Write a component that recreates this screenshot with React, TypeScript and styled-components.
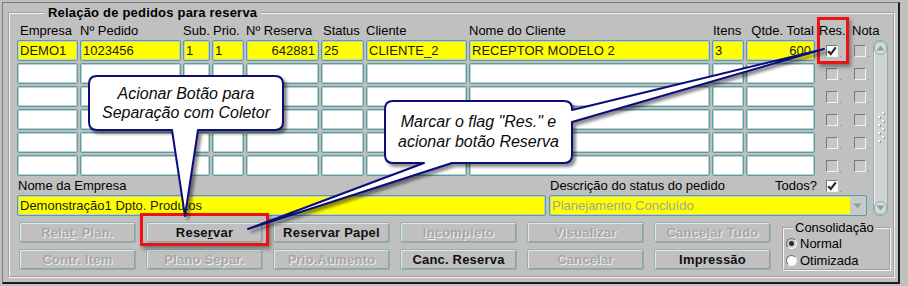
import React from "react";
import styled, { createGlobalStyle } from "styled-components";

const GlobalStyle = createGlobalStyle`
  html, body { margin: 0; padding: 0; background: #c0c0c0; }
  body { font-family: "Liberation Sans", Arial, sans-serif; font-size: 13px; color: #000; }
  * { box-sizing: border-box; }
`;

const FONT = `"Liberation Sans", Arial, sans-serif`;

const Page = styled.div`
  position: relative;
  width: 908px;
  height: 286px;
  overflow: hidden;
  background: #c0c0c0;
  padding: 2px 0 0 2px;
`;

const Window = styled.div`
  width: 898px;
  height: 282px;
  border-top: 1px solid #7b7b7b;
  border-left: 1px solid #7b7b7b;
  border-right: 2px solid #1e1e1e;
  border-bottom: 2px solid #1e1e1e;
  padding: 2px 0 0 5px;
`;

const Group = styled.fieldset`
  margin: 0;
  width: 887px;
  height: 273px;
  border: 2px groove #f4f4f4;
  padding: 3px 0 0 7px;
  min-width: 0;
`;

const GroupLegend = styled.legend`
  margin-left: 27px;
  padding: 0 4px;
  font: bold 13px ${FONT};
  letter-spacing: 0.2px;
  line-height: 15px;
  color: #000;
`;

const Upper = styled.div`
  display: flex;
  gap: 2px;
`;

const LeftBlock = styled.div`
  width: 854px;
  display: flex;
  flex-direction: column;
`;

const Table = styled.div`
  display: grid;
  grid-template-columns: 61px 101px 27px 32px 73px 43px 101px 241px 32px 69px 32px 20px;
  grid-template-rows: 15px repeat(6, 21px);
  column-gap: 2px;
  row-gap: 2px;
`;

const HeaderCell = styled.div<{ $align?: string; $pad?: number }>`
  line-height: 15px;
  white-space: nowrap;
  text-align: ${(p) => p.$align || "left"};
  padding-left: ${(p) => p.$pad ?? 0}px;
  padding-right: ${(p) => (p.$align === "right" ? 1 : 0)}px;
  color: #000;
  overflow: visible;
  direction: ${(p) => (p.$align === "right" ? "rtl" : "ltr")};
`;

const Cell = styled.div<{ $yellow?: boolean; $align?: string }>`
  background: ${(p) => (p.$yellow ? "#ffff00" : "#ffffff")};
  border: 1px solid #5f9b9b;
  box-shadow: inset 0 0 0 1px #b2d4d4;
  border-radius: 2px;
  padding: 0 3px 0 2px;
  display: flex;
  align-items: center;
  justify-content: ${(p) => (p.$align === "right" ? "flex-end" : "flex-start")};
  white-space: nowrap;
  overflow: hidden;
  color: #1a1a1a;
  line-height: 15px;
`;

const CheckCell = styled.div<{ $pad: number }>`
  display: flex;
  align-items: center;
  padding-left: ${(p) => p.$pad}px;
`;

const Box = styled.span<{ $checked?: boolean }>`
  position: relative;
  display: inline-flex;
  align-items: center;
  justify-content: center;
  width: 12px;
  height: 12px;
  flex: none;
  background: ${(p) => (p.$checked ? "#ffffff" : "#c6c6c6")};
  border-top: 1px solid #7a7a7a;
  border-left: 1px solid #7a7a7a;
  border-right: 1px solid #f2f2f2;
  border-bottom: 1px solid #f2f2f2;
  &::after {
    content: "";
    position: absolute;
    right: -4px;
    bottom: -1px;
    width: 1px;
    height: 1px;
    background: #8a8a8a;
  }
`;

const Footer = styled.div`
  margin-top: 2px;
  display: grid;
  grid-template-columns: 529px 318px;
  grid-template-rows: 16px 21px;
  column-gap: 3px;
  row-gap: 1px;
`;

const FooterLabel = styled.div`
  line-height: 16px;
  padding-left: 1px;
  white-space: nowrap;
  display: flex;
  align-items: center;
`;

const TodosLabel = styled.span`
  margin-left: auto;
  margin-right: 9px;
`;

const TodosBox = styled.span`
  margin-right: 29px;
  display: inline-flex;
`;

const StatusField = styled(Cell)`
  padding-right: 0;
  color: #a2a2a2;
`;

const StatusText = styled.span`
  flex: 1;
`;

const DropPart = styled.span`
  width: 15px;
  align-self: stretch;
  margin: 1px 1px 1px 0;
  background: #c9c9c9;
  display: flex;
  align-items: center;
  justify-content: center;
`;

const Scroll = styled.div`
  margin-top: 17px;
  width: 15px;
  height: 176px;
  border: 1px solid #86b2b2;
  border-radius: 7px;
  background: #d2d2d2;
  display: flex;
  flex-direction: column;
  justify-content: space-between;
  align-items: center;
  box-shadow: inset 1px 0 0 #eeeeee;
`;

const ScrollBtn = styled.div`
  width: 13px;
  height: 14px;
  border-radius: 6px;
  border: 1px solid #7fb0b0;
  background: #d8d8d8;
  display: flex;
  align-items: center;
  justify-content: center;
`;

const Grip = styled.div`
  display: flex;
`;

const BottomBar = styled.div`
  margin-top: 6px;
  padding-left: 2px;
  display: flex;
  align-items: flex-start;
`;

const ButtonGrid = styled.div`
  display: grid;
  grid-template-columns: repeat(6, 117px);
  grid-template-rows: repeat(2, 21px);
  column-gap: 10px;
  row-gap: 6px;
`;

const Btn = styled.button`
  height: 21px;
  width: 117px;
  padding: 0;
  margin: 0;
  background: #c0c0c0;
  border: 1px solid #8db3b3;
  border-radius: 2px;
  box-shadow: inset 1px 1px 0 #e6e6e6, inset -1px -1px 0 #9c9c9c;
  font: bold 13px ${FONT};
  letter-spacing: 0.2px;
  line-height: 15px;
  color: #101010;
  &:disabled {
    color: #a6a6a6;
    text-shadow: 1px 1px 0 #f0f0f0;
  }
`;

const Consol = styled.fieldset`
  margin: -2px 0 0 11px;
  width: 109px;
  border: 2px groove #f4f4f4;
  padding: 0 0 0 2px;
  min-width: 0;
`;

const ConsolLegend = styled.legend`
  margin-left: 7px;
  padding: 0 2px;
  font: 13px ${FONT};
  line-height: 15px;
`;

const RadioRow = styled.label`
  display: flex;
  align-items: center;
  height: 17px;
  gap: 3px;
  line-height: 15px;
`;

const Radio = styled.span<{ $checked?: boolean }>`
  width: 11px;
  height: 11px;
  border-radius: 50%;
  border-top: 1px solid #6a6a6a;
  border-left: 1px solid #6a6a6a;
  border-right: 1px solid #f4f4f4;
  border-bottom: 1px solid #f4f4f4;
  background: ${(p) => (p.$checked ? "#cfcfcf" : "#ffffff")};
  display: flex;
  align-items: center;
  justify-content: center;
  &::before {
    content: "";
    width: 5px;
    height: 5px;
    border-radius: 50%;
    background: ${(p) => (p.$checked ? "#2a2a2a" : "transparent")};
  }
`;

const RedBox = styled.div<{ $x: number; $y: number; $w: number; $h: number }>`
  position: absolute;
  left: ${(p) => p.$x}px;
  top: ${(p) => p.$y}px;
  width: ${(p) => p.$w}px;
  height: ${(p) => p.$h}px;
  border: 3px solid #ee1111;
  box-shadow: 2px 3px 4px rgba(0, 0, 0, 0.4);
  pointer-events: none;
`;

const Overlay = styled.svg`
  position: absolute;
  left: 0;
  top: 0;
  pointer-events: none;
`;

const CalloutText = styled.div<{ $x: number; $y: number; $w: number; $h: number; $lh: number }>`
  position: absolute;
  left: ${(p) => p.$x}px;
  top: ${(p) => p.$y}px;
  width: ${(p) => p.$w}px;
  height: ${(p) => p.$h}px;
  display: flex;
  flex-direction: column;
  align-items: center;
  justify-content: center;
  font: italic 16px ${FONT};
  line-height: ${(p) => p.$lh}px;
  color: #0a0a0a;
  white-space: nowrap;
  pointer-events: none;
`;

type Col = { label: string; align?: string; pad?: number };
const cols: Col[] = [
  { label: "Empresa", pad: 3 },
  { label: "Nº Pedido", pad: 0 },
  { label: "Sub.", pad: 0 },
  { label: "Prio.", pad: 1 },
  { label: "Nº Reserva", pad: 0 },
  { label: "Status", pad: 2 },
  { label: "Cliente", pad: 0 },
  { label: "Nome do Cliente", pad: 0 },
  { label: "Itens", pad: 1 },
  { label: "Qtde. Total", align: "right" },
  { label: "Res.", pad: 2 },
  { label: "Nota", pad: 1 },
];

const aligns = ["left", "left", "left", "left", "right", "left", "left", "left", "left", "right"];
const firstRow = ["DEMO1", "1023456", "1", "1", "642881", "25", "CLIENTE_2", "RECEPTOR MODELO 2", "3", "600"];

const Check = () => (
  <svg width="10" height="10" viewBox="0 0 10 10">
    <path d="M1.2 5.2 L3.8 8 L8.8 1.4" fill="none" stroke="#2c2c2c" strokeWidth="2.2" strokeLinejoin="miter" />
  </svg>
);

const Tri = ({ up }: { up?: boolean }) => (
  <svg width="9" height="6" viewBox="0 0 9 6">
    <path d={up ? "M0.5 5.5 L4.5 0.5 L8.5 5.5 Z" : "M0.5 0.5 L4.5 5.5 L8.5 0.5 Z"} fill="#8c9e9e" />
  </svg>
);

const GripDots = () => {
  const pts = [
    [8, 0], [4, 4], [8, 8], [4, 12], [8, 16], [4, 20], [8, 24], [4, 28],
  ];
  return (
    <svg width="13" height="32" viewBox="0 0 13 32">
      {pts.map(([x, y], i) => (
        <g key={i}>
          <rect x={x + 1} y={y + 1} width="2" height="2" fill="#8a9a9a" />
          <rect x={x} y={y} width="2" height="2" fill="#ffffff" />
        </g>
      ))}
    </svg>
  );
};

export default function App() {
  const rows = [firstRow, ...Array.from({ length: 5 }, () => Array(10).fill(""))];
  return (
    <Page>
      <GlobalStyle />
      <Window>
        <Group>
          <GroupLegend>Relação de pedidos para reserva</GroupLegend>
          <Upper>
            <LeftBlock>
              <Table>
                {cols.map((c, i) => (
                  <HeaderCell key={"h" + i} $align={c.align} $pad={c.pad}>
                    {c.label}
                  </HeaderCell>
                ))}
                {rows.map((r, ri) => (
                  <React.Fragment key={"r" + ri}>
                    {r.map((v, ci) => (
                      <Cell key={ci} $yellow={ri === 0} $align={aligns[ci]}>
                        {v}
                      </Cell>
                    ))}
                    <CheckCell $pad={9}>
                      <Box $checked={ri === 0}>{ri === 0 && <Check />}</Box>
                    </CheckCell>
                    <CheckCell $pad={3}>
                      <Box />
                    </CheckCell>
                  </React.Fragment>
                ))}
              </Table>
              <Footer>
                <FooterLabel>Nome da Empresa</FooterLabel>
                <FooterLabel>
                  <span>Descrição do status do pedido</span>
                  <TodosLabel>Todos?</TodosLabel>
                  <TodosBox>
                    <Box $checked>
                      <Check />
                    </Box>
                  </TodosBox>
                </FooterLabel>
                <Cell $yellow>Demonstração1 Dpto. Produtos</Cell>
                <StatusField $yellow>
                  <StatusText>Planejamento Concluído</StatusText>
                  <DropPart>
                    <Tri />
                  </DropPart>
                </StatusField>
              </Footer>
            </LeftBlock>
            <Scroll>
              <ScrollBtn>
                <Tri up />
              </ScrollBtn>
              <Grip>
                <GripDots />
              </Grip>
              <ScrollBtn>
                <Tri />
              </ScrollBtn>
            </Scroll>
          </Upper>
          <BottomBar>
            <ButtonGrid>
              <Btn disabled>
                Rela<u>t</u>. Plan.
              </Btn>
              <Btn>
                Rese<u>r</u>var
              </Btn>
              <Btn>Reservar Papel</Btn>
              <Btn disabled>
                I<u>n</u>completo
              </Btn>
              <Btn disabled>Visualizar</Btn>
              <Btn disabled>
                Cance<u>l</u>ar Tudo
              </Btn>
              <Btn disabled>Contr. Item</Btn>
              <Btn disabled>Plano Separ.</Btn>
              <Btn disabled>Prio.Aumento</Btn>
              <Btn>Canc. Reserva</Btn>
              <Btn disabled>Cancelar</Btn>
              <Btn>Impressão</Btn>
            </ButtonGrid>
            <Consol>
              <ConsolLegend>Consolidação</ConsolLegend>
              <RadioRow>
                <Radio $checked />
                Normal
              </RadioRow>
              <RadioRow>
                <Radio />
                Otimizada
              </RadioRow>
            </Consol>
          </BottomBar>
        </Group>
      </Window>

      <RedBox $x={817} $y={17} $w={32} $h={47} />
      <RedBox $x={140} $y={213} $w={129} $h={33} />

      <Overlay width="908" height="286" viewBox="0 0 908 286">
        <defs>
          <filter id="callShadow" x="-20%" y="-20%" width="150%" height="160%">
            <feDropShadow dx="3" dy="3" stdDeviation="1.6" floodColor="#000" floodOpacity="0.45" />
          </filter>
        </defs>
        <path
          d="M97 76 H275 Q283 76 283 84 V122 Q283 130 275 130 H198 L185 216 L172 130 H97 Q89 130 89 122 V84 Q89 76 97 76 Z"
          fill="#ffffff"
          stroke="#0b0b7a"
          strokeWidth="2"
          strokeLinejoin="round"
          filter="url(#callShadow)"
        />
        <path
          d="M393 101 H564 Q572 101 572 109 V110 L824 49 L572 122 V155 Q572 163 564 163 H452 L248 229 L424 163 H393 Q385 163 385 155 V109 Q385 101 393 101 Z"
          fill="#ffffff"
          stroke="#0b0b7a"
          strokeWidth="2"
          strokeLinejoin="round"
          filter="url(#callShadow)"
        />
      </Overlay>

      <CalloutText $x={89} $y={76} $w={194} $h={54} $lh={19}>
        <span>Acionar Botão para</span>
        <span>Separação com Coletor</span>
      </CalloutText>
      <CalloutText $x={385} $y={101} $w={187} $h={62} $lh={20}>
        <span>Marcar o flag "Res." e</span>
        <span>acionar botão Reserva</span>
      </CalloutText>
    </Page>
  );
}
